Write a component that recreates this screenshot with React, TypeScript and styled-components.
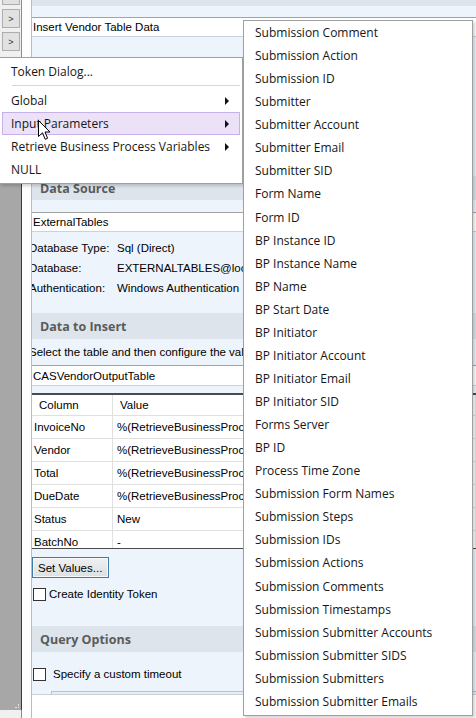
import React from "react";
import styled, { createGlobalStyle } from "styled-components";

const Global = createGlobalStyle`
  html, body { margin: 0; padding: 0; background: #f0f0f0; overflow: hidden; }
  * { box-sizing: border-box; }
`;

const UI = `"Open Sans", "Noto Sans", "DejaVu Sans", sans-serif`;
const WIN = `"Liberation Sans", Arial, sans-serif`;

const Root = styled.div`
  position: relative;
  width: 476px;
  height: 718px;
  display: flex;
  overflow: hidden;
  font-family: ${WIN};
  font-size: 11.5px;
  color: #000;
`;

const LeftRail = styled.div`
  width: 22px;
  display: flex;
  flex-direction: column;
  background: #f0f0f0;
  border-right: 1px solid #8c8c8c;
`;

const ButtonStack = styled.div`
  display: flex;
  flex-direction: column;
  gap: 4px;
  padding: 0 1px 0 2px;
  margin-top: -14px;
  height: 74px;
`;

const RailButton = styled.div`
  height: 19px;
  width: 18px;
  background: #e1e1e1;
  border: 1px solid #adadad;
  display: flex;
  align-items: center;
  justify-content: center;
  font-size: 9px;
  color: #333;
`;

const GrayPane = styled.div`
  flex: 1;
  background: #a7a7a7;
  border-right: 1px solid #3a3a3a;
  margin-right: -1px;
  position: relative;
`;

const Grip = styled.div`
  position: absolute;
  right: 2px;
  bottom: 2px;
  width: 4px;
  height: 4px;
  border-right: 1px dotted #e6e6e6;
  border-bottom: 1px dotted #e6e6e6;
`;

const RailFoot = styled.div`
  height: 8px;
  background: #f0f0f0;
`;

const WhiteStrip = styled.div`
  width: 10px;
  background: #fdfdfd;
  border-right: 1px solid #9ec3e8;
`;

const Panel = styled.div`
  flex: 1;
  display: flex;
  flex-direction: column;
  background: #edf4fc;
  overflow: hidden;
  min-width: 0;
`;

const Band = styled.div<{ $h: number; $mt?: number }>`
  height: ${(p) => p.$h}px;
  margin-top: ${(p) => p.$mt ?? 0}px;
  flex-shrink: 0;
  background: #dde4ec;
  display: flex;
  align-items: center;
  padding-left: 8px;
  font-family: ${UI};
  font-weight: 700;
  font-size: 12.5px;
  color: #5b5b5b;
`;

const TextBox = styled.div<{ $mt: number; $h?: number }>`
  margin-top: ${(p) => p.$mt}px;
  height: ${(p) => p.$h ?? 20}px;
  flex-shrink: 0;
  background: #fff;
  border-top: 1px solid #a3a3a3;
  border-bottom: 1px solid #c9d3de;
  display: flex;
  align-items: center;
  padding-left: 1px;
  white-space: nowrap;
`;

const Spacer = styled.div<{ $h: number }>`
  height: ${(p) => p.$h}px;
  flex-shrink: 0;
`;

const InfoGrid = styled.div`
  margin-top: 6px;
  margin-left: -3px;
  display: grid;
  grid-template-columns: 88px 1fr;
  grid-auto-rows: 20px;
  align-items: center;
  white-space: nowrap;
  flex-shrink: 0;
`;

const Hint = styled.div`
  margin-top: 5px;
  margin-left: -3px;
  height: 16px;
  line-height: 16px;
  white-space: nowrap;
  flex-shrink: 0;
`;

const Table = styled.div`
  margin-top: 7px;
  height: 156px;
  flex-shrink: 0;
  background: #fff;
  border-top: 2px solid #4a4a4a;
  border-bottom: 1px solid #4a4a4a;
  overflow: hidden;
`;

const TRow = styled.div<{ $head?: boolean }>`
  display: grid;
  grid-template-columns: 81px 1fr;
  height: ${(p) => (p.$head ? 21 : 23)}px;
  border-bottom: 1px solid #e0e0e0;
  white-space: nowrap;
`;

const TCell = styled.div<{ $pl: number }>`
  display: flex;
  align-items: center;
  padding-left: ${(p) => p.$pl}px;
  overflow: hidden;
  border-right: 1px solid #e0e0e0;
`;

const SetButton = styled.div`
  margin-top: 8px;
  width: 77px;
  height: 21px;
  flex-shrink: 0;
  background: linear-gradient(#eef0f2, #dde0e3);
  border: 1px solid #3d7bad;
  box-shadow: inset 0 0 0 1px #f6f8fa;
  display: flex;
  align-items: center;
  padding-left: 5px;
`;

const CheckRow = styled.div<{ $mt: number; $gap: number }>`
  margin-top: ${(p) => p.$mt}px;
  display: flex;
  align-items: center;
  gap: ${(p) => p.$gap}px;
  height: 14px;
  flex-shrink: 0;
  padding-left: 1px;
`;

const Box = styled.div`
  width: 13px;
  height: 13px;
  background: #fff;
  border: 1px solid #333;
`;

const InnerTop = styled.div`
  margin-top: 10px;
  margin-left: 19px;
  height: 3px;
  flex-shrink: 0;
  border-top: 1px solid #b9c3cd;
  border-left: 1px solid #b9c3cd;
  background: #e6edf4;
`;

const WhiteFoot = styled.div`
  flex: 1;
  background: #fff;
  border-top: 1px solid #c8d0d8;
`;

const MenuBox = styled.div<{ $x: number; $y: number; $w: number; $pt: number }>`
  position: absolute;
  left: ${(p) => p.$x}px;
  top: ${(p) => p.$y}px;
  width: ${(p) => p.$w}px;
  background: #fff;
  border: 1px solid #a0a0a0;
  box-shadow: 2px 2px 3px rgba(0, 0, 0, 0.18);
  padding: ${(p) => p.$pt}px 2px 2px;
  font-family: ${UI};
  font-size: 12px;
  color: #161616;
  display: flex;
  flex-direction: column;
`;

const MenuItem = styled.div<{ $active?: boolean; $h: number }>`
  height: ${(p) => p.$h}px;
  display: flex;
  align-items: center;
  justify-content: space-between;
  padding: 0 9px 0 8px;
  border: 1px solid ${(p) => (p.$active ? "#c8b0ea" : "transparent")};
  background: ${(p) => (p.$active ? "#ebe2f7" : "transparent")};
  white-space: nowrap;
`;

const Separator = styled.div`
  height: 1px;
  background: #d7d7d7;
  margin: 2px 0 3px 10px;
`;

const Cursor = styled.svg`
  position: absolute;
  left: 38px;
  top: 120px;
`;

const Arrow = () => (
  <svg width="5" height="8" viewBox="0 0 5 8">
    <path d="M0 0 L4 4 L0 8 Z" fill="#111" />
  </svg>
);

const subItems = [
  "Submission Comment",
  "Submission Action",
  "Submission ID",
  "Submitter",
  "Submitter Account",
  "Submitter Email",
  "Submitter SID",
  "Form Name",
  "Form ID",
  "BP Instance ID",
  "BP Instance Name",
  "BP Name",
  "BP Start Date",
  "BP Initiator",
  "BP Initiator Account",
  "BP Initiator Email",
  "BP Initiator SID",
  "Forms Server",
  "BP ID",
  "Process Time Zone",
  "Submission Form Names",
  "Submission Steps",
  "Submission IDs",
  "Submission Actions",
  "Submission Comments",
  "Submission Timestamps",
  "Submission Submitter Accounts",
  "Submission Submitter SIDS",
  "Submission Submitters",
  "Submission Submitter Emails",
];

const rows: [string, string][] = [
  ["InvoiceNo", "%(RetrieveBusinessProcessVariables.InvoiceNo)"],
  ["Vendor", "%(RetrieveBusinessProcessVariables.Vendor)"],
  ["Total", "%(RetrieveBusinessProcessVariables.Total)"],
  ["DueDate", "%(RetrieveBusinessProcessVariables.DueDate)"],
  ["Status", "New"],
  ["BatchNo", "-"],
];

export default function App() {
  return (
    <Root>
      <Global />
      <LeftRail>
        <ButtonStack>
          <RailButton>&gt;</RailButton>
          <RailButton>&gt;</RailButton>
          <RailButton>&gt;</RailButton>
        </ButtonStack>
        <GrayPane>
          <Grip />
        </GrayPane>
        <RailFoot />
      </LeftRail>
      <WhiteStrip />
      <Panel>
        <Band $h={6} />
        <TextBox $mt={11}>Insert Vendor Table Data</TextBox>
        <Spacer $h={139} />
        <Band $h={24}>Data Source</Band>
        <TextBox $mt={12}>ExternalTables</TextBox>
        <InfoGrid>
          <span>Database Type:</span>
          <span>Sql (Direct)</span>
          <span>Database:</span>
          <span>EXTERNALTABLES@localhost</span>
          <span>Authentication:</span>
          <span>Windows Authentication</span>
        </InfoGrid>
        <Band $h={26} $mt={15}>Data to Insert</Band>
        <Hint>Select the table and then configure the values to insert into each column.</Hint>
        <TextBox $mt={5} $h={21}>CASVendorOutputTable</TextBox>
        <Table>
          <TRow $head>
            <TCell $pl={7}>Column</TCell>
            <TCell $pl={7}>Value</TCell>
          </TRow>
          {rows.map(([c, v]) => (
            <TRow key={c}>
              <TCell $pl={2}>{c}</TCell>
              <TCell $pl={4}>{v}</TCell>
            </TRow>
          ))}
        </Table>
        <SetButton>Set Values...</SetButton>
        <CheckRow $mt={9} $gap={3}>
          <Box />
          <span>Create Identity Token</span>
        </CheckRow>
        <Band $h={26} $mt={25}>Query Options</Band>
        <CheckRow $mt={15} $gap={7}>
          <Box />
          <span>Specify a custom timeout</span>
        </CheckRow>
        <InnerTop />
        <WhiteFoot />
      </Panel>

      <MenuBox $x={-1} $y={57} $w={244} $pt={2}>
        <MenuItem $h={23}>Token Dialog...</MenuItem>
        <Separator />
        <MenuItem $h={23}>
          Global <Arrow />
        </MenuItem>
        <MenuItem $h={23} $active>
          Input Parameters <Arrow />
        </MenuItem>
        <MenuItem $h={23}>
          Retrieve Business Process Variables <Arrow />
        </MenuItem>
        <MenuItem $h={23}>NULL</MenuItem>
      </MenuBox>

      <MenuBox $x={243} $y={20} $w={230} $pt={0}>
        {subItems.map((s) => (
          <MenuItem key={s} $h={23.07}>
            {s}
          </MenuItem>
        ))}
      </MenuBox>

      <Cursor width="13" height="21" viewBox="0 0 13 21">
        <path
          d="M0.5 0.5 L0.5 16.5 L4.5 12.8 L7.2 19.3 L9.6 18.3 L7 12 L12 12 Z"
          fill="#fff"
          stroke="#000"
          strokeWidth="1"
          strokeLinejoin="miter"
        />
      </Cursor>
    </Root>
  );
}
